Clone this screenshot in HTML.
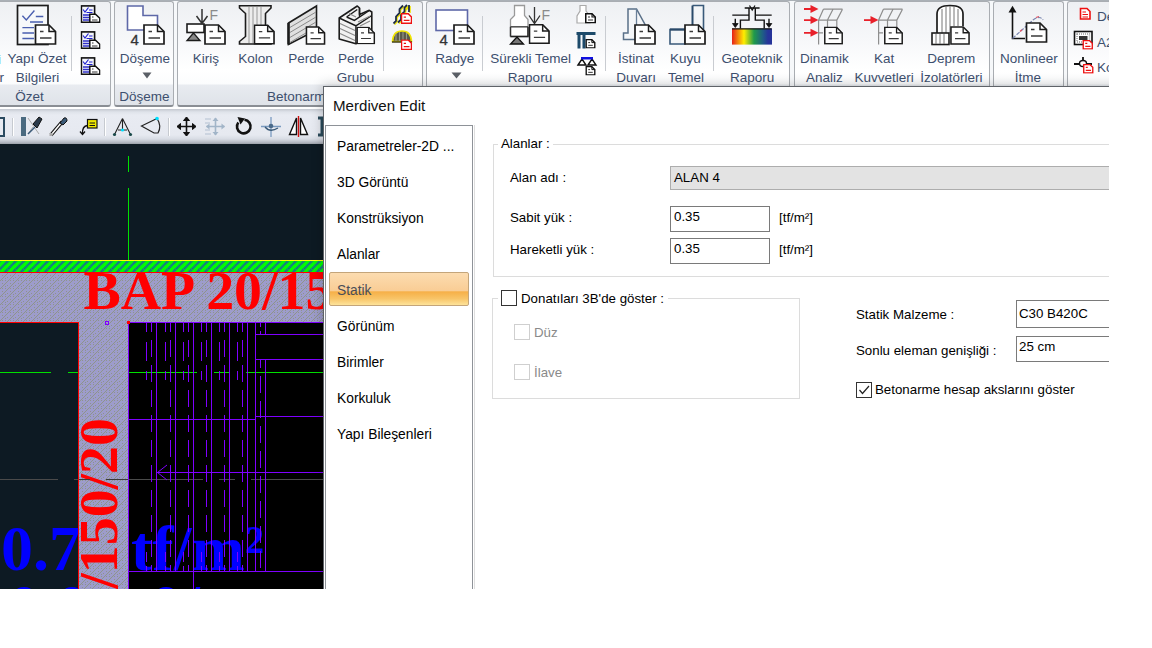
<!DOCTYPE html>
<html><head><meta charset="utf-8">
<style>
*{box-sizing:border-box}
body{margin:0;width:1152px;height:648px;background:#fff;position:relative;overflow:hidden;font-family:"Liberation Sans",sans-serif}
.a{position:absolute}
#ribbon{left:0;top:0;width:1109px;height:107px;background:#f6f8fa;border-top:1px solid #aab0b6;overflow:hidden}
.grp{position:absolute;top:0px;height:106px;border:1px solid #a9adb2;border-bottom:2px solid #8a8e94;border-radius:3px;background:linear-gradient(#eef0f3 0px,#f7f8fa 40px,#ffffff 68px,#fbfcfd 82px,#e8ebf0 83px,#dfe3e9 103px)}
.rt{position:absolute;font-size:13.5px;color:#3d4f6e;white-space:nowrap;line-height:15px}
.gl{position:absolute;font-size:13px;color:#3d4f6e;white-space:nowrap;line-height:15px}
.sep{position:absolute;width:1px;background:#c4c8cd}
#tb{left:0;top:109px;width:324px;height:35px;background:linear-gradient(#c4c8d0 0px,#dfe3ea 3px,#e8ebf2 6px,#e6e9f0 26px,#d8dce4 30px,#b8bdc6 33px,#9aa0a8 35px)}
#cad{left:0;top:144px;width:324px;height:445px;background:#0d1a23;overflow:hidden}
#clip{left:0;top:0;width:1109px;height:589px;overflow:hidden}
#dlg{left:323px;top:86px;width:800px;height:520px;overflow:hidden;background:#fff;box-shadow:0 0 11px 1px rgba(0,0,0,0.2);border-left:1px solid #5f6368;border-top:1px solid #5f6368}
.dt{position:absolute;font-size:13px;color:#000;white-space:nowrap;line-height:15px}
.box{position:absolute;border:1px solid #7a7a7a;background:#fff}
</style></head><body>
<div id="ribbon" class="a">
  <div class="grp" style="left:-10px;width:121px"></div>
  <div class="grp" style="left:114px;width:60px"></div>
  <div class="grp" style="left:177px;width:246px"></div>
  <div class="grp" style="left:426px;width:364px"></div>
  <div class="grp" style="left:794px;width:196px"></div>
  <div class="grp" style="left:993px;width:71px"></div>
  <div class="grp" style="left:1067px;width:60px"></div>
<svg class="a" style="left:0;top:-1px" width="1109" height="106" viewBox="0 0 1109 106">
<defs>
<symbol id="doc" viewBox="0 0 22 21"><path d="M1,1 H14.5 L21,7.5 V20 H1 Z" fill="#fff" stroke="#1c1c1c" stroke-width="1.7"/><path d="M14.5,1 V7.5 H21" fill="none" stroke="#1c1c1c" stroke-width="1.5"/><path d="M5.5,7.5 H9 M5.5,14 H17" stroke="#3a3a3a" stroke-width="1.4"/></symbol>
<symbol id="docs" viewBox="0 0 22 21"><path d="M1.5,1.5 H14 L20.5,8 V19.5 H1.5 Z" fill="#fff" stroke="#111" stroke-width="3"/><path d="M14,1.5 V8 H20.5" fill="none" stroke="#111" stroke-width="2.2"/><path d="M6,8 H10 M6,14 H16" stroke="#333" stroke-width="2.2"/></symbol>
<symbol id="docr" viewBox="0 0 22 21"><path d="M1,1 H14.5 L21,7.5 V20 H1 Z" fill="#fff" stroke="#ee1111" stroke-width="3"/><path d="M5.5,7.5 H10 M5.5,14 H17" stroke="#ee1111" stroke-width="2.5"/></symbol>
<symbol id="chk" viewBox="0 0 20 18"><rect x="0.9" y="0.9" width="13.2" height="16.4" fill="#f4f6fa" stroke="#111" stroke-width="1.6"/><path d="M2.5,4.5 L4.5,7 L8,2.5 M8.5,5 H12 M6,7.5 H12" stroke="#2020d0" stroke-width="1.2" fill="none"/><path d="M2.5,10 H9.5 M2.5,12.5 H9.5 M2.5,15 H9.5" stroke="#3030c8" stroke-width="1.3"/><path d="M9.3,9.3 H15 L19.3,13.3 V17.3 H9.3 Z" fill="#fff" stroke="#111" stroke-width="1.5"/><path d="M11.5,12 H13 M11.5,15 H17" stroke="#333" stroke-width="1"/></symbol>
<linearGradient id="geo" x1="0" x2="1"><stop offset="0" stop-color="#e8201a"/><stop offset="0.3" stop-color="#ffee00"/><stop offset="0.55" stop-color="#1f9a4a"/><stop offset="0.78" stop-color="#1f5a88"/><stop offset="0.9" stop-color="#26349a"/><stop offset="1" stop-color="#26349a"/></linearGradient>
</defs>
<!-- separators -->
<g fill="#c9ccd1"><rect x="71" y="16" width="1" height="55"/><rect x="383" y="16" width="1" height="55"/><rect x="482" y="16" width="1" height="55"/><rect x="605" y="16" width="1" height="55"/><rect x="713" y="16" width="1" height="55"/></g>
<!-- Yapi Ozet big -->
<rect x="17.5" y="5.5" width="30.5" height="39" fill="#f6f8fa" stroke="#1c1c1c" stroke-width="1.7"/>
<path d="M22.4,15.7 L26.3,20 L34.4,10.5 M35.8,16.5 H43.3 M30,22 H43 M22.4,27.6 H34 M22.4,33 H34 M22.4,38.5 H34" stroke="#4a5fb0" stroke-width="1.4" fill="none"/>
<use href="#doc" x="34" y="24" width="23" height="21"/>
<!-- small chk icons -->
<use href="#chk" x="80.5" y="5" width="20" height="18"/>
<use href="#chk" x="80.5" y="31" width="20" height="18"/>
<use href="#chk" x="80.5" y="57" width="20" height="18"/>
<!-- Doseme -->
<path d="M127.5,6 H143 V15.5 H157.5 V30 H127.5 Z" fill="#fff" stroke="#5e68a8" stroke-width="1.6"/>
<text x="130.5" y="44.5" font-family="Liberation Sans" font-size="15" fill="#333" stroke="#333" stroke-width="0.3">4</text>
<use href="#doc" x="143" y="24" width="22" height="21"/>
<path d="M142.5,72.5 H151.5 L147,78.5 Z" fill="#5a5f66"/>
<!-- Kiris -->
<rect x="187" y="24" width="17" height="8.5" fill="#fff" stroke="#1c1c1c" stroke-width="1.6"/>
<path d="M193.5,33 L187,40.5 H200 Z" fill="#888" stroke="#1c1c1c" stroke-width="1.3"/>
<path d="M202,9 V23.5 M196.5,16 L202,23.5 L207.5,16" stroke="#333" stroke-width="1.5" fill="none"/>
<text x="209.5" y="20" font-family="Liberation Sans" font-size="14" fill="#8a8a8a">F</text>
<use href="#doc" x="204" y="24" width="22" height="21"/>
<!-- Kolon -->
<path d="M239.5,5.8 H271 V8 L265.5,13.5 V36.5 L271,41.5 V44 H239.5 V41.5 L245.5,36.5 V13.5 L239.5,8 Z" fill="#ececec" stroke="#1c1c1c" stroke-width="1.6"/>
<path d="M249,7 V43 M253,7 V43 M257,7 V43 M261,7 V43" stroke="#a0a0a0" stroke-width="1.1"/>
<use href="#doc" x="253.5" y="24" width="21.5" height="21"/>
<!-- Perde -->
<path d="M288.5,23 L316.5,6 V30 L288.5,44.5 Z" fill="#e0e0e0" stroke="#1c1c1c" stroke-width="1.6"/>
<path d="M289,28 L316,12 M289,33 L316,17 M289,38 L316,22 M289,43 L316,27" stroke="#8a8a8a" stroke-width="1"/>
<path d="M288.5,23 V44.5" stroke="#1c1c1c" stroke-width="2.5"/>
<use href="#doc" x="305" y="26" width="21" height="19"/>
<!-- Perde Grubu -->
<path d="M339.2,18 L357.3,6 L359.5,8 V14.5 L369.3,10.3 L371.8,12 V35 L355.9,43.8 L339.2,38.9 Z" fill="#f2f2f2" stroke="#1c1c1c" stroke-width="1.6" stroke-linejoin="round"/>
<path d="M339.2,18 L355.9,25.8 V43.8 M355.9,25.8 L371.8,15.5 M346.6,17 L354.4,20.4 L369.3,10.5 M346.6,17 L357.3,9.5 M359.5,8 V17" stroke="#1c1c1c" stroke-width="1.4" fill="none"/>
<path d="M340,23.5 L355,30.5 M340,28.5 L355,35.5 M340,33.5 L355,40.5 M349,13.5 L356,17 M358,22 L370,16 M360,26 L370,21" stroke="#8a8a8a" stroke-width="1.1"/>
<use href="#doc" x="355.5" y="26.5" width="20.5" height="18"/>
<!-- small stairs / dome -->
<path d="M393.5,23.5 L396,21 V16.5 L399.5,13 V9 L403,5.5 M398,22.5 L401,19.5 V15 L404.5,11.5 V7.5 L407,5 M405,9 L407,7 V5 M409,5 V12" stroke="#f0e400" stroke-width="1.6" fill="none" transform="translate(1,1)"/>
<path d="M393.5,23.5 L396,21 V16.5 L399.5,13 V9 L403,5.5 M398,22.5 L401,19.5 V15 L404.5,11.5 V7.5 L407,5 M409,5 V12" stroke="#1e2c48" stroke-width="1.8" fill="none"/>
<use href="#docr" x="401" y="13" width="11" height="11"/>
<path d="M392.5,41.5 Q393,31 402,31 Q411,31 411.5,41.5 Z" fill="#5a5a4a" stroke="#f0e400" stroke-width="1.6"/>
<path d="M396,34 V41 M399.5,32 V41 M403,32 V41 M406.5,33 V41" stroke="#9a9a8a" stroke-width="1.1"/>
<path d="M392,42 H412" stroke="#111" stroke-width="1.2"/>
<use href="#docr" x="401" y="39.5" width="11" height="10.5"/>
<!-- Radye -->
<rect x="436" y="10" width="31.5" height="20.5" fill="#fff" stroke="#5e68a8" stroke-width="1.6"/>
<text x="439.5" y="44.5" font-family="Liberation Sans" font-size="15" fill="#333" stroke="#333" stroke-width="0.3">4</text>
<use href="#doc" x="453" y="24" width="22" height="21"/>
<path d="M451.5,72.5 H461.5 L456.5,78.5 Z" fill="#5a5f66"/>
<!-- Surekli -->
<path d="M514.5,5.5 H524.5 V15.5 L528,19.5 V36.5 H510.5 V19.5 L514.5,15.5 Z" fill="#fff" stroke="#9a9a9a" stroke-width="1.3"/>
<path d="M510.5,26.8 H528" stroke="#555" stroke-width="1.6"/>
<path d="M510.5,36.5 H528 V26.8" stroke="#222" stroke-width="1.5" fill="none"/>
<path d="M510.5,26.8 V36.5" stroke="#333" stroke-width="1.4"/>
<path d="M517,37 L510.5,44 H523.5 Z" fill="#777" stroke="#111" stroke-width="1.3"/>
<path d="M534.5,7 V23.5 M529,15.5 L534.5,23.5 L540,15.5" stroke="#333" stroke-width="1.3" fill="none"/>
<text x="541.5" y="19.5" font-family="Liberation Sans" font-size="14" fill="#8a8a8a">F</text>
<use href="#doc" x="528.5" y="23.5" width="21.5" height="21"/>
<!-- small foundation icons -->
<path d="M580,5.5 H586 V11 L590,16 V23 H577 V16 L580,11 Z" fill="#fff" stroke="#aaa" stroke-width="1.2"/>
<use href="#docs" x="585" y="13" width="11" height="10.5"/>
<path d="M576.5,33.5 H595.5 M579,34 V48.5 M584,34 V48.5" stroke="#1d4a6a" stroke-width="3" fill="none"/>
<use href="#docs" x="585" y="39" width="11" height="9.5"/>
<path d="M578,65 L582,59 L586,65 Z M588,65 L592,59 L596,65 Z" fill="#fff" stroke="#111" stroke-width="1.4"/>
<rect x="581" y="57" width="12" height="2.5" fill="#1010e0"/>
<use href="#docs" x="585" y="66" width="11" height="9.5"/>
<!-- Istinat -->
<path d="M628,9 H636.5 L645,24.5 V39.5 H623.5 V33 H628 Z" fill="#f4f6f8" stroke="#5a7088" stroke-width="1.5"/><path d="M636.5,9 V25" stroke="#6a8098" stroke-width="1.3"/>
<use href="#doc" x="634" y="24" width="22" height="21"/>
<!-- Kuyu -->
<path d="M692.5,5.5 H703.5 V40 M670,29.5 H685 V44 H670 Z" fill="#f4f6f8" stroke="#3a5a7a" stroke-width="1.6"/>
<path d="M692.5,5.5 V26" stroke="#2a4a6a" stroke-width="2"/><path d="M670,29.5 H685" stroke="#2a4a6a" stroke-width="2.2"/>
<use href="#doc" x="684" y="24" width="22" height="21"/>
<!-- Geoteknik -->
<path d="M744.7,8 H759.6 M749,8 V15.1 H732.3 M755.3,8 V15.1 H771.7 M749,15.1 V20.1 H740.4 V28.6 M755.3,15.1 V20.1 H764.2 V28.6" stroke="#111" stroke-width="1.4" fill="none"/>
<path d="M749.5,5.5 L752.2,10 L755,5.5" stroke="#111" stroke-width="1.2" fill="none"/>
<path d="M735.3,18.7 V25 M769,18.7 V25" stroke="#111" stroke-width="1.4"/>
<path d="M732.5,23.5 L735.3,27.5 L738.1,23.5 Z M766.2,23.5 L769,27.5 L771.8,23.5 Z" fill="#111" stroke="#111" stroke-width="0.8"/>
<rect x="732" y="28.6" width="40" height="16" fill="url(#geo)"/>
<path d="M732,28.8 H771.7" stroke="#111" stroke-width="1.2"/>
<!-- Dinamik -->
<path d="M818.6,20.1 V44.5 M818.6,20.1 H836.8 M827.5,20.1 V27 M836.8,20.1 V27 M823.4,9.2 H842.5 M823.4,9.2 L818.6,20.1 M833,9.2 L827.5,20.1 M842.5,9.2 L836.8,20.1 M818.6,32.8 H823" stroke="#8e8e8e" stroke-width="1.2" fill="none"/>
<path d="M804,9 H812 M804,20.1 H812 M804,32.8 H812" stroke="#e8202a" stroke-width="1.8"/>
<path d="M810.5,5 L818.5,9 L810.5,13 Z M810.5,16.1 L818.5,20.1 L810.5,24.1 Z M810.5,28.8 L818.5,32.8 L810.5,36.8 Z" fill="#e8202a"/>
<use href="#doc" x="823" y="26.4" width="21" height="18.3"/>
<!-- Kat -->
<path d="M878.6,20.1 V44.5 M878.6,20.1 H896.8 M887.5,20.1 V27 M896.8,20.1 V27 M883.4,9.2 H902.5 M883.4,9.2 L878.6,20.1 M893,9.2 L887.5,20.1 M902.5,9.2 L896.8,20.1 M878.6,32.8 H883" stroke="#8e8e8e" stroke-width="1.2" fill="none"/>
<path d="M864,20.1 H872" stroke="#e8202a" stroke-width="1.8"/>
<path d="M870.5,16.1 L878.5,20.1 L870.5,24.1 Z" fill="#e8202a"/>
<use href="#doc" x="883" y="26.4" width="21" height="18.3"/>
<!-- Deprem -->
<path d="M937,33 V14 Q937,5.5 950,5.5 Q963,5.5 963,14 V26" fill="#fff" stroke="#1c1c1c" stroke-width="1.7"/>
<path d="M942,9 V33 M946,6.5 V33 M950,6 V33 M954,6.5 V26 M958,9 V26" stroke="#777" stroke-width="1"/>
<rect x="932" y="33" width="17" height="11.5" fill="#fff" stroke="#1c1c1c" stroke-width="1.6"/>
<path d="M936,34 V44 M940,34 V44 M944,34 V44" stroke="#777" stroke-width="1"/>
<use href="#doc" x="949" y="26" width="22" height="19"/>
<!-- Nonlineer -->
<path d="M1012.5,10 V38.5 H1025" stroke="#111" stroke-width="1.6" fill="none"/>
<path d="M1008.5,12.5 L1012.5,5.8 L1016.5,12.5 Z" fill="#111"/>
<path d="M1012.5,38.5 L1033,20 Q1040,15 1043,20" stroke="#7a86b0" stroke-width="1.2" fill="none" stroke-dasharray="4 1.5"/><path d="M1020,31.5 L1022,29.7 M1036,17.5 L1039,16.5" stroke="#e05060" stroke-width="1.3"/>
<use href="#doc" x="1025" y="22" width="23" height="21"/>
<!-- right small red icons -->
<path d="M1080.5,8.5 H1087 L1090,11.5 V19 H1080.5 Z" fill="#fff" stroke="#ee1111" stroke-width="1.6"/><path d="M1082.5,12 H1086 M1082.5,14.5 H1088 M1082.5,17 H1088" stroke="#ee1111" stroke-width="1.1"/>
<rect x="1074.5" y="31.5" width="17.5" height="13" fill="#fff" stroke="#111" stroke-width="1.6"/>
<rect x="1077" y="34" width="12.5" height="8" fill="#fff" stroke="#999" stroke-width="1.4" stroke-dasharray="1 1"/><rect x="1079" y="36" width="8.5" height="4" fill="#333"/>
<use href="#docr" x="1082" y="40" width="11.5" height="9.5"/>
<path d="M1074,64 H1092 M1083,57 V60" stroke="#111" stroke-width="1.8"/><ellipse cx="1083" cy="63.5" rx="3.5" ry="3" fill="#fff" stroke="#111" stroke-width="1.4"/>
<use href="#docr" x="1082.5" y="64" width="11.5" height="9.5"/>
</svg><div class="rt" style="left:-22.9px;top:49.9px;width:120px;text-align:center">Yapı Özet</div><div class="rt" style="left:-22.5px;top:68.7px;width:120px;text-align:center">Bilgileri</div><div class="rt" style="left:-30.6px;top:87.8px;width:120px;text-align:center">Özet</div><div class="rt" style="left:85.0px;top:49.9px;width:120px;text-align:center">Döşeme</div><div class="rt" style="left:84.3px;top:87.8px;width:120px;text-align:center">Döşeme</div><div class="rt" style="left:145.8px;top:49.9px;width:120px;text-align:center">Kiriş</div><div class="rt" style="left:195.4px;top:49.9px;width:120px;text-align:center">Kolon</div><div class="rt" style="left:246.2px;top:49.9px;width:120px;text-align:center">Perde</div><div class="rt" style="left:295.9px;top:49.9px;width:120px;text-align:center">Perde</div><div class="rt" style="left:295.5px;top:68.7px;width:120px;text-align:center">Grubu</div><div class="rt" style="left:240.0px;top:87.8px;width:120px;text-align:center">Betonarme</div><div class="rt" style="left:394.7px;top:49.9px;width:120px;text-align:center">Radye</div><div class="rt" style="left:470.7px;top:49.9px;width:120px;text-align:center">Sürekli Temel</div><div class="rt" style="left:470.0px;top:68.7px;width:120px;text-align:center">Raporu</div><div class="rt" style="left:576.0px;top:49.9px;width:120px;text-align:center">İstinat</div><div class="rt" style="left:576.1px;top:68.7px;width:120px;text-align:center">Duvarı</div><div class="rt" style="left:625.5px;top:49.9px;width:120px;text-align:center">Kuyu</div><div class="rt" style="left:626.0px;top:68.7px;width:120px;text-align:center">Temel</div><div class="rt" style="left:692.0px;top:49.9px;width:120px;text-align:center">Geoteknik</div><div class="rt" style="left:692.1px;top:68.7px;width:120px;text-align:center">Raporu</div><div class="rt" style="left:764.4px;top:49.9px;width:120px;text-align:center">Dinamik</div><div class="rt" style="left:764.4px;top:68.7px;width:120px;text-align:center">Analiz</div><div class="rt" style="left:824.1px;top:49.9px;width:120px;text-align:center">Kat</div><div class="rt" style="left:824.1px;top:68.7px;width:120px;text-align:center">Kuvvetleri</div><div class="rt" style="left:891.3px;top:49.9px;width:120px;text-align:center">Deprem</div><div class="rt" style="left:891.4px;top:68.7px;width:120px;text-align:center">İzolatörleri</div><div class="rt" style="left:968.8px;top:49.9px;width:120px;text-align:center">Nonlineer</div><div class="rt" style="left:967.8px;top:68.7px;width:120px;text-align:center">İtme</div><div class="rt" style="left:-59px;top:50.6px;width:60px;text-align:right;color:#3aa6d8">i</div><div class="rt" style="left:-56px;top:69.39999999999999px;width:60px;text-align:right">r</div><div class="rt" style="left:1097px;top:7.499999999999998px">De</div><div class="rt" style="left:1097px;top:33.5px">A2</div><div class="rt" style="left:1097px;top:59.4px">Ko</div>
</div>
<div id="tb" class="a"><svg class="a" style="left:0;top:0" width="324" height="35" viewBox="0 109 324 35">
<g fill="#c6cad0"><rect x="12" y="118" width="1" height="18"/><rect x="104" y="118" width="1" height="18"/><rect x="168" y="118" width="1" height="18"/></g>
<g fill="#fff"><rect x="13" y="118" width="1" height="18"/><rect x="105" y="118" width="1" height="18"/><rect x="169" y="118" width="1" height="18"/></g>
<path d="M-2,118 H4 V136 H-2" fill="none" stroke="#2a4a60" stroke-width="2"/>
<rect x="21" y="117" width="5" height="19" fill="#4a6a80"/>
<path d="M28,118 L39,134 M28,134 L33,127" stroke="#aaa" stroke-width="1"/>
<path d="M28,134 L35,127" stroke="#3a5a78" stroke-width="1.5"/>
<path d="M33,124 L39,117 L42,119 L37,128 Z" fill="#2a3a4a" stroke="#111" stroke-width="1"/>
<path d="M51,135 L62,122" stroke="#111" stroke-width="3.5"/>
<path d="M51.5,134.5 L61.5,122.5" stroke="#fff" stroke-width="1.5"/>
<path d="M60,123 L64,118 Q67,117 67,121 L63,125 Z" fill="#3a5a78" stroke="#111" stroke-width="1"/>
<rect x="49.5" y="133" width="3" height="3" fill="#aaa"/>
<rect x="87.5" y="119.5" width="9.5" height="8.5" fill="#f0e800" stroke="#111" stroke-width="1.2"/>
<path d="M89.5,123 H95 M89.5,125.5 H95" stroke="#111" stroke-width="1"/>
<path d="M87.5,125.5 Q82,126 82.5,134 M80,131.5 L82.5,134.5 L85,131.5" stroke="#111" stroke-width="1.3" fill="none"/>
<path d="M122.5,118.5 L114.5,134.5 M122.5,118.5 L130.5,134.5 M122.5,118.5 V130 M118,130 H127" stroke="#222" stroke-width="1.1" fill="none"/>
<circle cx="114.5" cy="134.5" r="1.6" fill="#1a4a4a"/><circle cx="130.5" cy="134.5" r="1.6" fill="#1a4a4a"/><circle cx="122.5" cy="130" r="1.6" fill="#00e0ff"/>
<path d="M141.5,126 L157,118.5 Q162,126 158,133 H154 Z" stroke="#222" stroke-width="1.2" fill="none"/>
<circle cx="157" cy="118.5" r="1.8" fill="#00e0ff"/>
<path d="M186.5,117.5 V135.5 M177.5,126.5 H195.5" stroke="#111" stroke-width="1.6"/>
<path d="M183.5,120.5 L186.5,117 L189.5,120.5 Z M183.5,132.5 L186.5,136 L189.5,132.5 Z M180.5,123.5 L177,126.5 L180.5,129.5 Z M192.5,123.5 L196,126.5 L192.5,129.5 Z" fill="#111" stroke="#111" stroke-width="1"/>
<g opacity="0.55"><path d="M215.5,118 V135 M206.5,126.5 H224.5" stroke="#6a8aa8" stroke-width="1.6"/>
<path d="M212.5,121 L215.5,117.5 L218.5,121 Z M212.5,132 L215.5,135.5 L218.5,132 Z M209.5,123.5 L206,126.5 L209.5,129.5 Z M221.5,123.5 L225,126.5 L221.5,129.5 Z" fill="#6a8aa8"/>
<path d="M205,119 H211 M205,123 H210 M205,130 H210 M205,134 H211" stroke="#8aa0b8" stroke-width="1.2"/></g>
<path d="M238.3,122.5 A6.8,6.8 0 1 0 244.5,119.8" stroke="#111" stroke-width="2.6" fill="none"/>
<path d="M237.5,117 L245,118.5 L240.5,124.5 Z" fill="#111"/>
<path d="M271,117 V137 M261,126.5 H281" stroke="#7a9ac0" stroke-width="1.3"/>
<path d="M265,127 Q270,133 278,128" stroke="#3a5a78" stroke-width="1.3" fill="none"/>
<circle cx="271" cy="126" r="2.3" fill="#4a6a8a"/>
<path d="M289.5,134.5 L296.5,118 V134.5 Z M307.5,134.5 L300.5,118 V134.5 Z" fill="#fff" stroke="#111" stroke-width="1.4"/>
<path d="M298.5,116 V137" stroke="#cc1010" stroke-width="1.4"/>
<path d="M318,118 H326 M322,118 V135 M318,135 H326" stroke="#2a4a5a" stroke-width="3"/>
</svg></div>
<div id="cad" class="a"><svg width="324" height="445" viewBox="0 144 324 445" style="position:absolute;left:0;top:0" shape-rendering="crispEdges">
<defs>
<pattern id="hg" width="8" height="8" patternUnits="userSpaceOnUse" patternTransform="translate(0,261)">
<rect width="8" height="8" fill="#00ff00"/>
<path d="M-2,10 L10,-2 M-2,2 L2,-2 M6,10 L10,6" stroke="#1f4fb0" stroke-width="2.4" stroke-dasharray="1.2 0.5" shape-rendering="auto"/>
</pattern>
<pattern id="lav" width="8" height="8" patternUnits="userSpaceOnUse" patternTransform="translate(0,1)">
<rect width="8" height="8" fill="#9d9ccb"/>
<g fill="#8e948c"><rect x="0" y="7" width="1" height="1"/><rect x="1" y="6" width="1" height="1"/><rect x="2" y="5" width="1" height="1"/><rect x="3" y="4" width="1" height="1"/><rect x="4" y="3" width="1" height="1"/><rect x="5" y="2" width="1" height="1"/><rect x="6" y="1" width="1" height="1"/><rect x="7" y="0" width="1" height="1"/>
<rect x="2" y="2" width="1" height="1"/><rect x="7" y="4" width="1" height="1"/><rect x="5" y="5" width="1" height="1"/><rect x="2" y="7" width="1" height="1"/><rect x="5" y="7" width="1" height="1"/></g>
</pattern>
</defs>
<rect x="0" y="144" width="324" height="445" fill="#0d1a23"/>
<rect x="128" y="156" width="1" height="16" fill="#00e000"/>
<rect x="128" y="188" width="1" height="73" fill="#00e000"/>
<rect x="0" y="260" width="324" height="1" fill="#ffff00"/>
<rect x="0" y="261" width="324" height="11" fill="url(#hg)"/>
<rect x="0" y="272" width="324" height="317" fill="url(#lav)"/>
<rect x="0" y="272" width="324" height="1" fill="#ff0000"/>
<text transform="translate(83.5,309) scale(1.035,1)" x="0" y="0" font-family="Liberation Serif" font-weight="bold" font-size="54" fill="#ff0000" shape-rendering="auto">BAP 20/150/20</text>
<rect x="0" y="322" width="79" height="267" fill="#0d1a23"/>
<rect x="128" y="322" width="196" height="267" fill="#000"/>
<g fill="#00e000"><rect x="0" y="372" width="51" height="1"/><rect x="68" y="372" width="10" height="1"/>
<rect x="128" y="372" width="69" height="1"/><rect x="214" y="372" width="15" height="1"/><rect x="246" y="372" width="78" height="1"/></g>
<g fill="#4a4a4a"><rect x="0" y="479" width="58" height="1"/><rect x="74" y="479" width="16" height="1"/><rect x="106" y="479" width="97" height="1"/><rect x="219" y="479" width="16" height="1"/><rect x="251" y="479" width="73" height="1"/></g>
<g font-family="Liberation Serif" font-weight="bold" font-size="64" fill="#0000ff" shape-rendering="auto">
<text x="1" y="570">0.7</text><text x="131" y="570">tf/m²</text>
<text x="8" y="629">0.0</text><text x="150" y="629">0/m</text>
</g>
<g fill="#7f00ff">
<rect x="156" y="322" width="1" height="250"/><rect x="175" y="322" width="1" height="250"/><rect x="193" y="322" width="1" height="267"/><rect x="211" y="322" width="1" height="250"/><rect x="229" y="322" width="1" height="250"/><rect x="247" y="322" width="1" height="250"/><rect x="255" y="322" width="1" height="250"/><rect x="265" y="322" width="1" height="12"/><rect x="265" y="359" width="1" height="213"/>
<rect x="128" y="322" width="196" height="1"/>
<rect x="128" y="322" width="1" height="267"/>
<rect x="128" y="419" width="128" height="1"/>
<rect x="255" y="416" width="69" height="1"/>
<rect x="255" y="334" width="69" height="1"/>
<rect x="255" y="359" width="69" height="1"/>
<rect x="157" y="472" width="167" height="1"/>
<rect x="128" y="571" width="196" height="1"/>
<rect x="193" y="571" width="1" height="18"/><rect x="146" y="552" width="1" height="10"/><rect x="146" y="566" width="1" height="5"/><rect x="165" y="552" width="1" height="10"/><rect x="165" y="566" width="1" height="5"/><rect x="183" y="552" width="1" height="10"/><rect x="183" y="566" width="1" height="5"/><rect x="201" y="552" width="1" height="10"/><rect x="201" y="566" width="1" height="5"/><rect x="219" y="552" width="1" height="10"/><rect x="219" y="566" width="1" height="5"/><rect x="237" y="552" width="1" height="10"/><rect x="237" y="566" width="1" height="5"/>
</g>
<path d="M167,465 L157.5,472.5 L167,480" stroke="#7f00ff" fill="none" stroke-width="1" shape-rendering="auto"/>
<g stroke="#7f00ff" stroke-width="1">
<g stroke-dasharray="9 10 19 10" stroke-dashoffset="0"><line x1="146.5" y1="323" x2="146.5" y2="381"/><line x1="165.5" y1="323" x2="165.5" y2="381"/><line x1="183.5" y1="323" x2="183.5" y2="381"/><line x1="201.5" y1="323" x2="201.5" y2="381"/><line x1="219.5" y1="323" x2="219.5" y2="381"/><line x1="237.5" y1="323" x2="237.5" y2="381"/></g>
<g stroke-dasharray="16.5 8.5" stroke-dashoffset="8"><line x1="151.5" y1="323" x2="151.5" y2="571"/><line x1="170.5" y1="323" x2="170.5" y2="571"/><line x1="188.5" y1="323" x2="188.5" y2="571"/><line x1="206.5" y1="323" x2="206.5" y2="571"/><line x1="224.5" y1="323" x2="224.5" y2="571"/><line x1="242.5" y1="323" x2="242.5" y2="571"/></g>
<line x1="260.5" y1="323" x2="260.5" y2="327" /><line x1="260.5" y1="331" x2="260.5" y2="334"/><line x1="260.5" y1="360" x2="260.5" y2="571" stroke-dasharray="7.5 8.5 16.5 8.5 16.5 8.5 16.5 8.5 16.5 8.5 16.5 8.5 16.5 8.5 16.5 8.5 16.5 8.5 16.5 8.5"/>
</g>
<rect x="79" y="322" width="49" height="267" fill="url(#lav)"/>
<text transform="translate(117,418) rotate(-90) scale(1.035,1)" text-anchor="end" font-family="Liberation Serif" font-weight="bold" font-size="54" fill="#ff0000" shape-rendering="auto">BAP 20/150/20</text>
<g fill="#3a3a3a"><rect x="79" y="479" width="11" height="1"/><rect x="106" y="479" width="22" height="1"/></g><rect x="0" y="322" width="79" height="1" fill="#ff0000"/>
<rect x="78" y="322" width="1" height="267" fill="#ff0000"/>
<rect x="105" y="321" width="3" height="3" fill="none" stroke="#7f00ff" stroke-width="1"/>
<rect x="127" y="321" width="3" height="3" fill="#ff0000"/>
</svg></div>
<div id="clip" class="a"><div id="dlg" class="a">
<div class="dt" style="left:9px;top:10px;font-size:15.1px;line-height:18px;color:#111">Merdiven Edit</div>
<div class="a" style="left:1px;top:38px;width:148px;height:480px;border:1px solid #8e9298;border-bottom:none;background:#fff"></div>
<div class="a" style="left:150px;top:38px;width:1px;height:480px;background:#dedede"></div>
<div class="a" style="left:5px;top:185px;width:140px;height:34px;border:1px solid #c4a57a;border-radius:2px;background:linear-gradient(#fcdcb0 0%,#f9cd95 55%,#f6b048 59%,#f8c468 80%,#fde39a 100%)"></div>
<div class="dt" style="left:13px;top:52px;font-size:13.8px">Parametreler-2D ...</div>
<div class="dt" style="left:13px;top:88px;font-size:13.8px">3D Görüntü</div>
<div class="dt" style="left:13px;top:124px;font-size:13.8px">Konstrüksiyon</div>
<div class="dt" style="left:13px;top:160px;font-size:13.8px">Alanlar</div>
<div class="dt" style="left:13px;top:196px;font-size:13.8px;color:#4a4e58">Statik</div>
<div class="dt" style="left:13px;top:232px;font-size:13.8px">Görünüm</div>
<div class="dt" style="left:13px;top:268px;font-size:13.8px">Birimler</div>
<div class="dt" style="left:13px;top:304px;font-size:13.8px">Korkuluk</div>
<div class="dt" style="left:13px;top:340px;font-size:13.8px">Yapı Bileşenleri</div>
<div class="a" style="left:169px;top:57px;width:640px;height:133px;border:1px solid #dcdcdc;border-right:none"></div>
<div class="dt" style="left:174px;top:49px;font-size:13.3px;background:#fff;padding:0 3px">Alanlar :</div>
<div class="dt" style="left:186px;top:83px;font-size:13.3px">Alan adı :</div>
<div class="a" style="left:346px;top:79px;width:450px;height:24px;border:1px solid #adadad;background:#e3e3e3"></div>
<div class="dt" style="left:350px;top:83px;font-size:13.3px">ALAN 4</div>
<div class="dt" style="left:186px;top:123px;font-size:13.3px">Sabit yük :</div>
<div class="box" style="left:346px;top:119px;width:100px;height:26px"></div>
<div class="dt" style="left:350px;top:122px;font-size:13.3px">0.35</div>
<div class="dt" style="left:455px;top:123px;font-size:13.3px">[tf/m²]</div>
<div class="dt" style="left:186px;top:155px;font-size:13.3px">Hareketli yük :</div>
<div class="box" style="left:346px;top:151px;width:100px;height:26px"></div>
<div class="dt" style="left:350px;top:154px;font-size:13.3px">0.35</div>
<div class="dt" style="left:455px;top:155px;font-size:13.3px">[tf/m²]</div>

<div class="a" style="left:168px;top:211px;width:308px;height:101px;border:1px solid #dcdcdc"></div>
<div class="a" style="left:174px;top:201px;width:170px;height:20px;background:#fff"></div>
<div class="a" style="left:177px;top:203px;width:16px;height:16px;border:1px solid #333;background:#fff"></div>
<div class="dt" style="left:197px;top:204px;font-size:13.3px">Donatıları 3B'de göster :</div>
<div class="a" style="left:190px;top:237px;width:16px;height:16px;border:1px solid #cfcfcf;background:#fff"></div>
<div class="dt" style="left:210px;top:238px;font-size:13.3px;color:#8a8a8a">Düz</div>
<div class="a" style="left:190px;top:277px;width:16px;height:16px;border:1px solid #cfcfcf;background:#fff"></div>
<div class="dt" style="left:210px;top:278px;font-size:13.3px;color:#8a8a8a">İlave</div>

<div class="dt" style="left:532px;top:220px;font-size:13.3px">Statik Malzeme :</div>
<div class="box" style="left:692px;top:213px;width:120px;height:28px"></div>
<div class="dt" style="left:695px;top:219px;font-size:13.3px">C30 B420C</div>
<div class="dt" style="left:532px;top:256px;font-size:13.3px">Sonlu eleman genişliği :</div>
<div class="box" style="left:692px;top:249px;width:120px;height:26px"></div>
<div class="dt" style="left:695px;top:252px;font-size:13.3px">25 cm</div>
<div class="a" style="left:532px;top:295px;width:16px;height:16px;border:1px solid #333;background:#fff"></div>
<svg class="a" style="left:532px;top:295px" width="16" height="16"><path d="M3.5,8 L6.5,11.5 L13,4" stroke="#222" stroke-width="1.2" fill="none"/></svg>
<div class="dt" style="left:551px;top:295px;font-size:13.3px">Betonarme hesap akslarını göster</div>
</div>
</div>
</body></html>
